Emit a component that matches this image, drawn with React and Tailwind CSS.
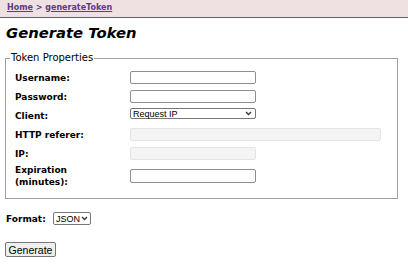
export default function App() {
  const labelCls = "w-[115px] shrink-0 font-bold text-[9px] leading-[12px] text-black";
  const inputCls = "h-[13px] border border-[#8f8f8f] rounded-[2px] bg-white";
  const arial = { fontFamily: '"Liberation Sans", Arial, sans-serif' };
  const chevron = (
    <svg width="7" height="5" viewBox="0 0 7 5"><path d="M1 1l2.5 2.5L6 1" stroke="#333" strokeWidth="1.3" fill="none" /></svg>
  );
  return (
    <div className="w-[408px] h-[270px] bg-white" style={{ fontFamily: '"DejaVu Sans", Verdana, sans-serif' }}>
      <div className="h-[18px] bg-[#efe1e1] border-b border-[#606060] pl-[7px] flex items-center pb-[2px]">
        <span className="text-[8px] leading-[10px] font-bold text-[#5b3b8c] underline">Home</span>
        <span className="text-[8px] leading-[10px] font-bold text-[#5b3b8c] whitespace-pre"> &gt; </span>
        <span className="text-[8px] leading-[10px] font-bold text-[#5b3b8c] underline">generateToken</span>
      </div>
      <div className="pl-[6px] pt-[6px] text-[14.8px] font-bold italic leading-[18px]">Generate Token</div>
      <fieldset className="ml-[5px] mt-[10px] w-[393px] h-[147px] border border-[#a0a0a0] pl-[9px] pr-0 pt-0 pb-0">
        <legend className="text-[10px] px-[1px] ml-[-5px] leading-[12px]">Token Properties</legend>
        <div className="flex flex-col pt-[4px]">
          <div className="flex items-center h-[19px]">
            <div className={labelCls}>Username:</div>
            <div className={inputCls + " w-[126px]"}></div>
          </div>
          <div className="flex items-center h-[19px]">
            <div className={labelCls}>Password:</div>
            <div className={inputCls + " w-[126px]"}></div>
          </div>
          <div className="flex items-center h-[19px]">
            <div className={labelCls}>Client:</div>
            <div className="h-[11px] w-[126px] mb-[4px] border border-[#767676] rounded-[2px] flex items-center justify-between pl-[2px] pr-[3px]">
              <span className="text-[9px] leading-[10px]" style={arial}>Request IP</span>
              {chevron}
            </div>
          </div>
          <div className="flex items-center h-[19px]">
            <div className={labelCls}>HTTP referer:</div>
            <div className="h-[13px] w-[251px] mb-[1px] border border-[#e4e4e4] rounded-[2px] bg-[#f4f4f4]"></div>
          </div>
          <div className="flex items-center h-[19px]">
            <div className={labelCls}>IP:</div>
            <div className="h-[13px] w-[126px] mb-[1px] border border-[#e4e4e4] rounded-[2px] bg-[#f4f4f4]"></div>
          </div>
          <div className="flex items-center h-[26px]">
            <div className={labelCls}>Expiration<br />(minutes):</div>
            <div className={inputCls + " w-[126px] h-[14px]"}></div>
          </div>
        </div>
      </fieldset>
      <div className="flex items-center pl-[6px] mt-[12px] h-[15px]">
        <span className="font-bold text-[9px] leading-[12px] w-[47px] shrink-0">Format:</span>
        <div className="h-[13px] w-[38px] border border-[#767676] rounded-[2px] flex items-center justify-between pl-[2px] pr-[2px]">
          <span className="text-[9px] leading-[10px]" style={arial}>JSON</span>
          {chevron}
        </div>
      </div>
      <div className="pl-[5px] mt-[16px] flex">
        <div className="flex items-center h-[15px] w-[51px] justify-center border border-[#767676] rounded-[2px] bg-[#efefef] text-[10.5px] leading-[12px]" style={arial}>Generate</div>
      </div>
    </div>
  );
}
